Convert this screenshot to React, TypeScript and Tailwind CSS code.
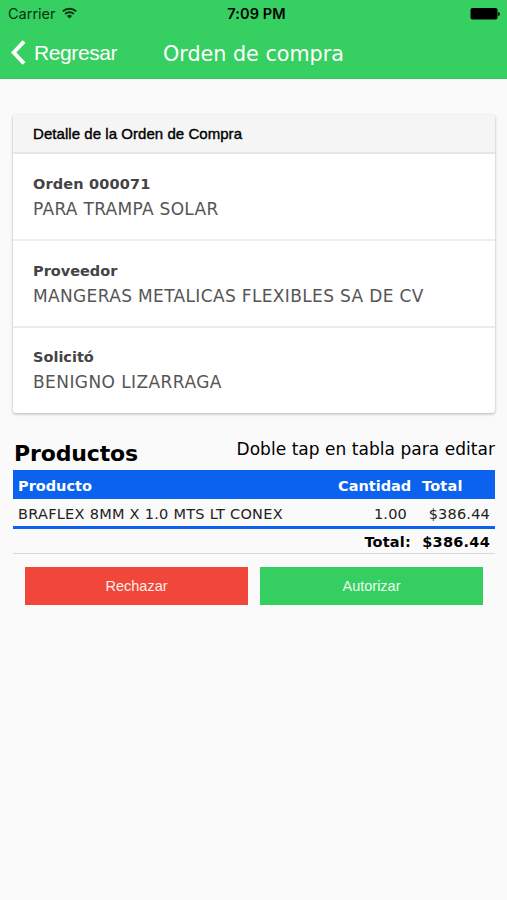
import { clsx } from "clsx";

const details = [
  { label: "Orden 000071", value: "PARA TRAMPA SOLAR", labelClass: "tracking-[0.15px]", valueClass: "tracking-[0.3px]" },
  { label: "Proveedor", value: "MANGERAS METALICAS FLEXIBLES SA DE CV", labelClass: "tracking-[0px]", valueClass: "tracking-[0.35px]" },
  { label: "Solicitó", value: "BENIGNO LIZARRAGA", labelClass: "tracking-[0px]", valueClass: "tracking-[0.42px]" },
];

function StatusBar() {
  return (
    <div className="grid h-7 grid-cols-3 items-center pl-2 pr-[7px] font-['Inter',sans-serif] text-black">
      <div className="flex items-center gap-[6px]">
        <span className="text-[14.500px] leading-none text-[#04330f]">Carrier</span>
        <svg className="mb-[2px]" width="15" height="12" viewBox="0 0 15 12" fill="none" stroke="#04330f" strokeWidth="2">
          <path d="M0.8 4.400a9.600 9.600 0 0 1 13.400 0" />
          <path d="M3.200 7a6.200 6.200 0 0 1 8.600 0" />
          <path d="M7.500 11.600 5 8.900a3.600 3.600 0 0 1 5 0z" fill="#04330f" stroke="none" />
        </svg>
      </div>
      <span className="pl-[5px] text-center text-[14.500px] font-semibold leading-none tracking-[0.1px]">7:09 PM</span>
      <svg className="mb-px justify-self-end" width="30" height="12" viewBox="0 0 30 12">
        <rect x="0.5" y="0" width="27" height="11.500" rx="2" />
        <path d="M28.200 4c1.100.300 1.600 1 1.600 2s-.5 1.700-1.600 2z" />
      </svg>
    </div>
  );
}

function Header() {
  return (
    <header className="h-[79px] border-b border-[#34c45d] bg-[#36cf61]">
      <StatusBar />
      <div className="flex h-[51px] items-center pl-[11px] text-white">
        <svg className="mb-[3px]" width="15" height="25" viewBox="0 0 15 25" fill="none" stroke="currentColor" strokeWidth="4">
          <path d="M13 1.500 2.700 12.500l10.300 11" />
        </svg>
        <span className="mb-[3px] w-[137px] whitespace-nowrap pl-[8px] font-['Liberation_Sans',sans-serif] text-[21px] leading-none tracking-[-0.4px]">
          Regresar
        </span>
        <h1 className="mt-px whitespace-nowrap text-[20.700px] leading-none">Orden de compra</h1>
      </div>
    </header>
  );
}

export default function App() {
  return (
    <div className="h-[900px] w-[507px] overflow-hidden bg-[#fafafa] font-['DejaVu_Sans',sans-serif] text-black">
      <Header />

      <main className="pl-[13px] pr-3 pt-9">
        <section className="h-[298px] overflow-clip rounded-[3px] bg-white shadow-[0_1px_3px_rgba(0,0,0,0.3)]">
          <div className="flex h-[39px] items-center border-b-2 border-[#e6e6e6] bg-[#f5f5f5] pl-5 pt-px font-['Liberation_Sans',sans-serif] text-[15px] tracking-[0.05px] [-webkit-text-stroke:0.4px_black]">
            Detalle de la Orden de Compra
          </div>
          {details.map((d, i) => (
            <div
              key={d.label}
              className={clsx(
                "h-[87px] whitespace-nowrap pl-5 text-[#444]",
                i < 2 ? "border-b-2 border-[#ececec] pt-[19px]" : "pt-[18px]"
              )}
            >
              <p className={clsx("text-[14.500px] font-bold leading-[22px]", d.labelClass)}>{d.label}</p>
              <p className={clsx("pt-px text-[17px] leading-[26px] text-[#555]", d.valueClass)}>{d.value}</p>
            </div>
          ))}
        </section>

        <div className="flex h-[57px] justify-between whitespace-nowrap">
          <h2 className="pl-px pt-[27px] text-[22px] font-bold leading-[28px] tracking-[-0.15px]">Productos</h2>
          <p className="pt-[25px] text-[17px] leading-[22px] tracking-[0.04px]">Doble tap en tabla para editar</p>
        </div>

        <table className="w-full table-fixed border-collapse whitespace-nowrap text-[14.500px] leading-none">
          <colgroup>
            <col className="w-[315px]" />
            <col className="w-[88px]" />
            <col className="w-[79px]" />
          </colgroup>
          <thead>
            <tr className="h-[29px] bg-[#0a62ef] text-left text-white">
              <th className="pl-[5px] pt-[3px]">Producto</th>
              <th className="pl-[10px] pt-[3px]">Cantidad</th>
              <th className="pl-[6px] pt-[3px] tracking-[0.2px]">Total</th>
            </tr>
          </thead>
          <tbody>
            <tr className="h-[28px] border-b-[3px] border-[#0a62ef] text-[#222]">
              <td className="pl-[5px] pt-[3px] tracking-[0.27px]">BRAFLEX 8MM X 1.0 MTS LT CONEX</td>
              <td className="pr-[9px] pt-[3px] text-right tracking-[0.2px]">1.00</td>
              <td className="pr-[5px] pt-[3px] text-right tracking-[0.2px]">$386.44</td>
            </tr>
          </tbody>
          <tfoot>
            <tr className="h-[26px] border-b border-[#d8d8d8] font-bold">
              <td />
              <td className="pr-[5px] pt-[3px] text-right tracking-[0.2px]">Total:</td>
              <td className="pr-[5px] pt-[3px] text-right tracking-[0.25px]">$386.44</td>
            </tr>
          </tfoot>
        </table>

        <div className="flex gap-3 px-3 pt-[13px] font-['Liberation_Sans',sans-serif] text-[14.500px] text-white/90">
          <button className="h-[38px] flex-1 bg-[#f0473a] pt-[3px]">Rechazar</button>
          <button className="h-[38px] flex-1 bg-[#35cf61] pt-[3px]">Autorizar</button>
        </div>
      </main>
    </div>
  );
}
